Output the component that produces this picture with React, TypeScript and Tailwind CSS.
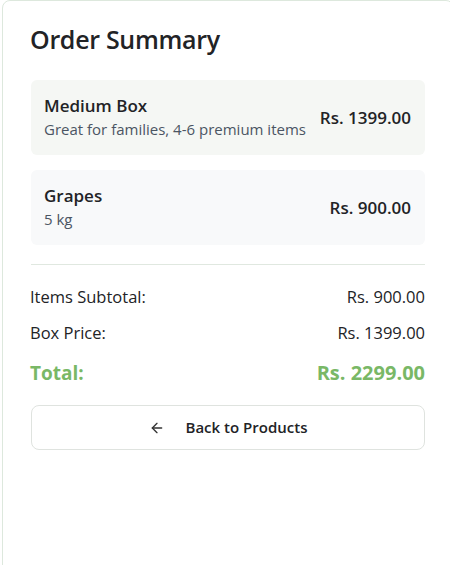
import React from "react";

export default function App() {
  return (
    <div
      className="h-[565px] w-[450px] overflow-hidden bg-white pl-[2px]"
      style={{ fontFamily: '"Open Sans", "Noto Sans", Arial, sans-serif' }}
    >
      <div className="w-[452px] min-h-[600px] rounded-lg border border-[#dde8dd] bg-white px-[28px] pt-[20px] pb-8">
        <h2 className="-ml-[1px] text-[25px] leading-[36px] font-semibold text-[#222326] tracking-[-0.3px]">
          Order Summary
        </h2>

        <div className="mt-[23px] flex flex-col gap-[15px]">
          <div className="flex items-center justify-between rounded-md bg-[#f5f7f4] px-[13px] py-[14px]">
            <div className="flex flex-col">
              <span className="text-[17px] leading-[24px] font-semibold text-[#222326]">
                Medium Box
              </span>
              <span className="text-[15px] leading-[23px] text-[#4b5563]">
                Great for families, 4-6 premium items
              </span>
            </div>
            <span className="mr-[1px] text-[17px] font-semibold text-[#222326]">Rs. 1399.00</span>
          </div>

          <div className="flex items-center justify-between rounded-md bg-[#f8f9fa] px-[13px] py-[14px]">
            <div className="flex flex-col">
              <span className="text-[17px] leading-[24px] font-semibold text-[#222326]">
                Grapes
              </span>
              <span className="text-[15px] leading-[23px] text-[#4b5563]">5 kg</span>
            </div>
            <span className="mr-[1px] text-[17px] font-semibold text-[#222326]">Rs. 900.00</span>
          </div>
        </div>

        <div className="mt-[19px] border-t border-[#e0e8e0] pt-[20px] flex flex-col">
          <div className="flex justify-between text-[16.5px] leading-[24px] text-[#222326]">
            <span className="-ml-[1px]">Items Subtotal:</span>
            <span>Rs. 900.00</span>
          </div>
          <div className="mt-[12px] flex justify-between text-[16.5px] leading-[24px] text-[#222326]">
            <span className="-ml-[1px]">Box Price:</span>
            <span>Rs. 1399.00</span>
          </div>
          <div className="mt-[14px] flex justify-between text-[19px] leading-[28px] font-bold text-[#79b866]">
            <span className="-ml-[1px]">Total:</span>
            <span className="text-[20px]">Rs. 2299.00</span>
          </div>
        </div>

        <button className="mt-[18px] flex h-[45px] w-full items-center justify-center gap-[21px] rounded-lg border border-[#dfe3df] bg-white text-[15px] font-semibold text-[#222326]">
          <svg width="16" height="16" viewBox="0 0 24 24" fill="none" stroke="#333" strokeWidth="2" strokeLinecap="round" strokeLinejoin="round">
            <path d="M19 12H5" />
            <path d="M12 19l-7-7 7-7" />
          </svg>
          <span>Back to Products</span>
        </button>
      </div>
    </div>
  );
}
